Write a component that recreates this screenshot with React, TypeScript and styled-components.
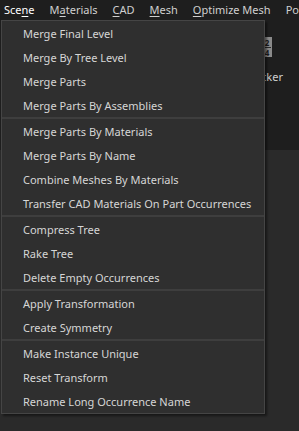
import React from 'react';
import styled, { createGlobalStyle } from 'styled-components';

const GlobalStyle = createGlobalStyle`
  html, body {
    margin: 0;
    padding: 0;
    background: #2a2a2a;
    font-family: "Noto Sans", "Open Sans", sans-serif;
  }
`;

const Window = styled.div`
  position: relative;
  width: 299px;
  height: 431px;
  overflow: hidden;
  background: #2a2a2a;
`;

const MenuBar = styled.div`
  display: flex;
  align-items: center;
  height: 20px;
  padding-left: 4px;
  gap: 15px;
  background: #1e1e1e;
  white-space: nowrap;
`;

const BarItem = styled.span<{ $active?: boolean }>`
  font-size: 11px;
  color: ${p => (p.$active ? '#ffffff' : '#d0d0d0')};
  line-height: 20px;

  u {
    text-decoration-thickness: 1px;
    text-underline-offset: 2px;
  }
`;

const Toolbar = styled.div`
  display: flex;
  flex-direction: column;
  align-items: flex-end;
  height: 130px;
  box-sizing: border-box;
  padding: 17px 16px 0 0;
  gap: 12px;
  background: #1e1e1e;
`;

const Fraction = styled.div`
  width: 10px;
  height: 20px;
  background: #8a8a8a;
  color: #1a1a1a;
  font-size: 8px;
  font-weight: bold;
  line-height: 9px;
  text-align: center;
  display: flex;
  flex-direction: column;
  justify-content: center;
  margin-right: 11px;

  hr {
    margin: 0 1px;
    border: 0;
    border-top: 1px solid #2a2a2a;
  }
`;

const ToolLabel = styled.span`
  font-size: 11px;
  line-height: 16px;
  color: #d0d0d0;
`;

const Dropdown = styled.div`
  position: absolute;
  left: 1px;
  top: 20px;
  width: 262px;
  background: #2f2f2f;
  border: 1px solid #454545;
  box-shadow: 2px 2px 2px rgba(0, 0, 0, 0.45);
`;

const Item = styled.div`
  height: 24px;
  display: flex;
  align-items: center;
  padding-left: 21px;
  font-size: 11px;
  color: #d6d6d6;
  white-space: nowrap;
`;

const Separator = styled.div`
  height: 2px;
  background: #3e3e3e;
`;

const groups = [
  ['Merge Final Level', 'Merge By Tree Level', 'Merge Parts', 'Merge Parts By Assemblies'],
  [
    'Merge Parts By Materials',
    'Merge Parts By Name',
    'Combine Meshes By Materials',
    'Transfer CAD Materials On Part Occurrences',
  ],
  ['Compress Tree', 'Rake Tree', 'Delete Empty Occurrences'],
  ['Apply Transformation', 'Create Symmetry'],
  ['Make Instance Unique', 'Reset Transform', 'Rename Long Occurrence Name'],
];

export default function App() {
  return (
    <Window>
      <GlobalStyle />
      <MenuBar>
        <BarItem $active>Sce<u>n</u>e</BarItem>
        <BarItem>M<u>a</u>terials</BarItem>
        <BarItem><u>C</u>AD</BarItem>
        <BarItem><u>M</u>esh</BarItem>
        <BarItem><u>O</u>ptimize Mesh</BarItem>
        <BarItem>Po</BarItem>
      </MenuBar>
      <Toolbar>
        <Fraction>
          <span>2</span>
          <hr />
          <span>4</span>
        </Fraction>
        <ToolLabel>Picker</ToolLabel>
      </Toolbar>
      <Dropdown>
        {groups.map((g, i) => (
          <React.Fragment key={i}>
            {i > 0 && <Separator />}
            {g.map(label => (
              <Item key={label}>{label}</Item>
            ))}
          </React.Fragment>
        ))}
      </Dropdown>
    </Window>
  );
}
